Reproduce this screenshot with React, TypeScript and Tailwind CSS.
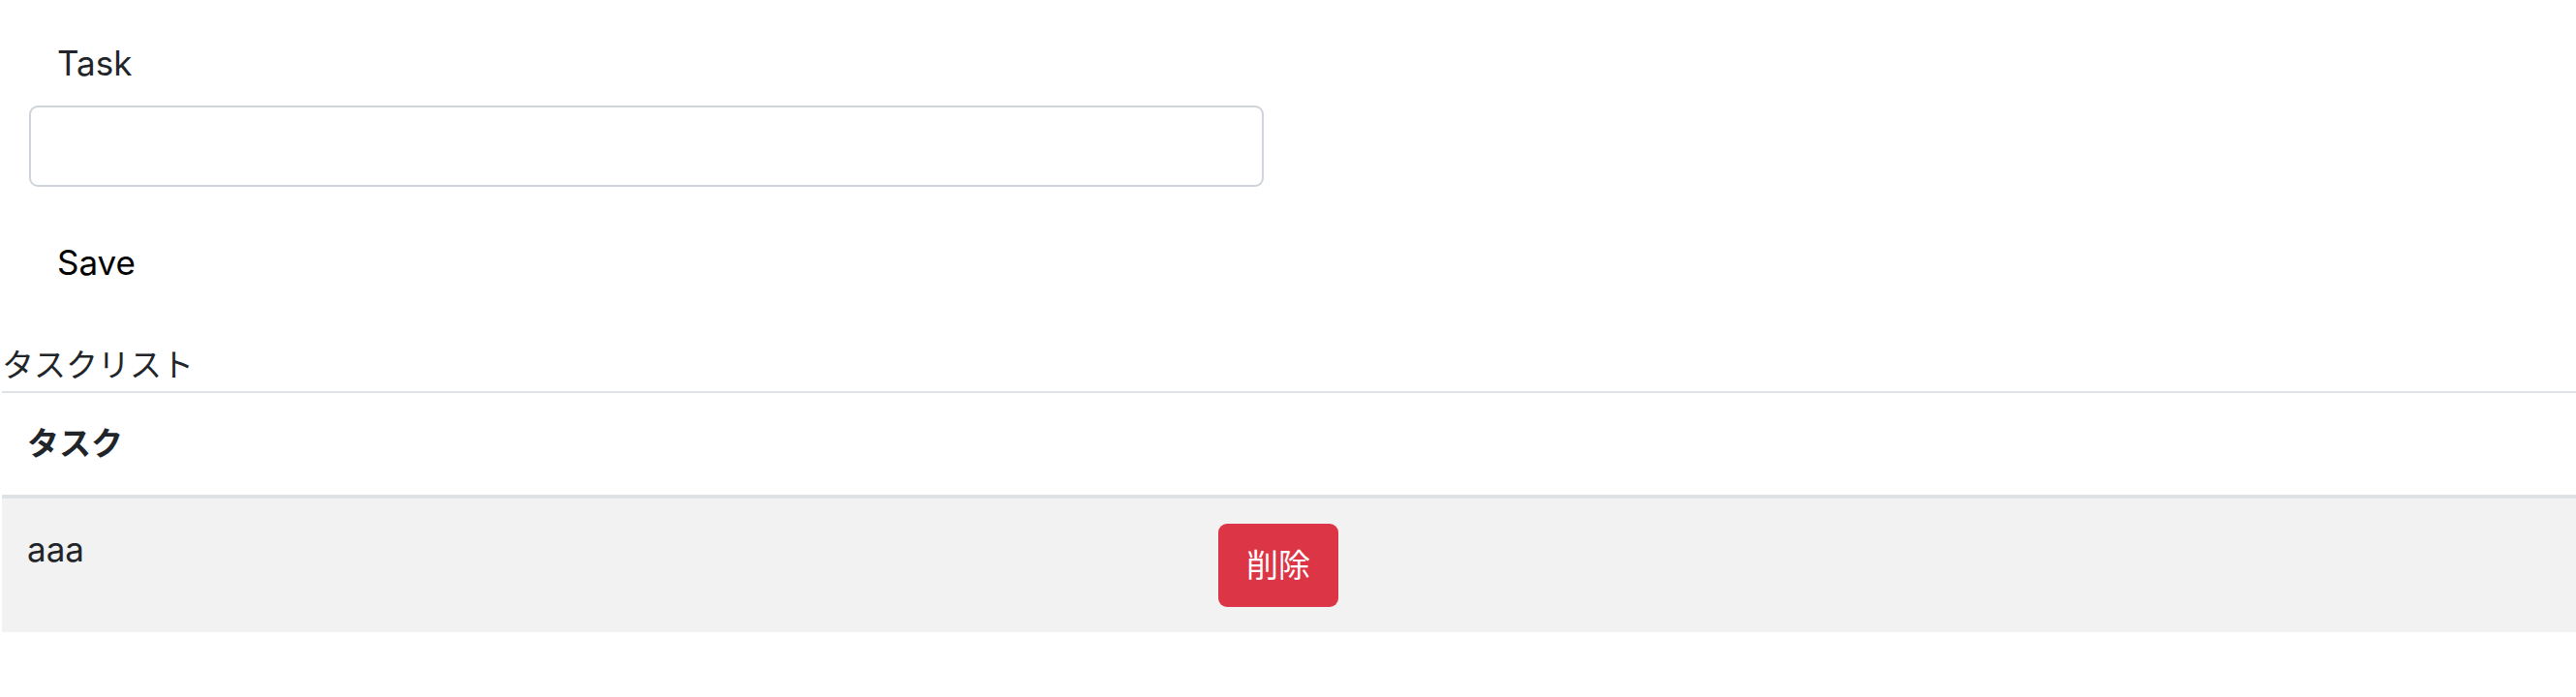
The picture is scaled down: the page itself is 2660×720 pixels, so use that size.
import React, { useState } from 'react';

const FONT = 'font-["Inter","Noto_Sans_CJK_JP",sans-serif]';

const App: React.FC = () => {
  const [task, setTask] = useState('');
  const [tasks, setTasks] = useState<string[]>(['aaa']);

  const save = () => {
    if (!task.trim()) return;
    setTasks([...tasks, task]);
    setTask('');
  };

  return (
    <div className={`${FONT} min-h-screen bg-white text-[35px] leading-[53px] text-[#212529]`}>
      <div className="pt-[39px]">
        <label className="block pl-[59px] mb-[17px]">Task</label>
        <div className="pl-[30px]">
          <input
            value={task}
            onChange={(e) => setTask(e.target.value)}
            className="block w-[1275px] h-[84px] rounded-[9px] border-[2px] border-[#ced4da] bg-white px-[26px] outline-none"
          />
        </div>
        <button onClick={save} className="block ml-[59px] mt-[52px] text-black leading-[53px]">
          Save
        </button>
      </div>

      <div className="mt-[53px] pl-[2px] text-[33px]">タスクリスト</div>

      <table className="ml-[2px] w-[2658px] border-collapse text-left">
        <thead>
          <tr>
            <th className="w-[1230px] border-t-[2px] border-b-[4px] border-[#dee2e6] px-[26px] py-[26px] text-[33px] font-bold align-bottom">タスク</th>
            <th className="border-t-[2px] border-b-[4px] border-[#dee2e6] px-[26px] py-[26px]"></th>
          </tr>
        </thead>
        <tbody>
          {tasks.map((t, i) => (
            <tr key={i} className={i % 2 === 0 ? 'bg-[#f2f2f2]' : ''}>
              <td className="px-[26px] py-[26px] align-top">{t}</td>
              <td className="px-[26px] py-[26px] align-top">
                <button
                  onClick={() => setTasks(tasks.filter((_, j) => j !== i))}
                  className="flex items-center justify-center w-[124px] h-[86px] rounded-[9px] bg-[#dc3545] text-[33px] text-white"
                >
                  削除
                </button>
              </td>
            </tr>
          ))}
        </tbody>
      </table>
    </div>
  );
};

export default App;
